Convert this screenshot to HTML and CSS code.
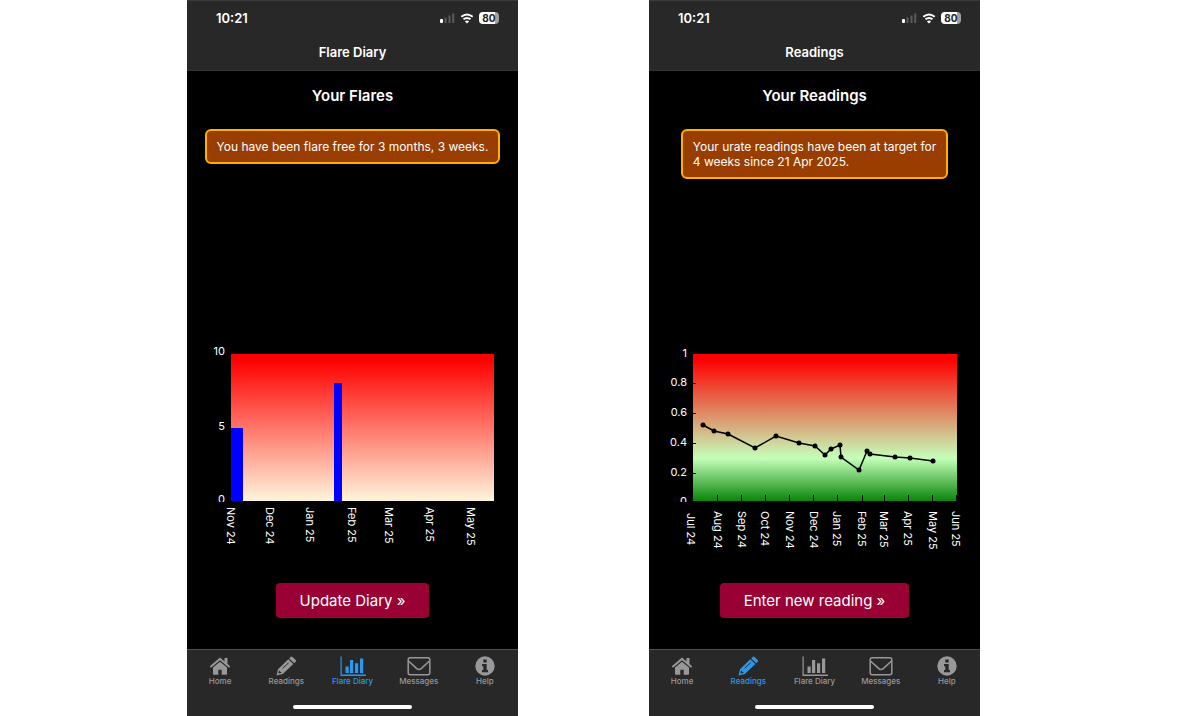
FILE: index.html
```html
<!DOCTYPE html>
<html lang="en">
<head>
    <meta charset="UTF-8">
    <meta name="viewport" content="width=device-width, initial-scale=1.0">
    <title>Flare Diary</title>
    <link rel="stylesheet" href="styles.css">
</head>
<body>
<!-- Shared icons -->
<svg class="icon-defs" width="0" height="0" aria-hidden="true">
    <symbol id="icon-home" viewBox="0 0 22 20">
        <path d="M11 5.8 4 11.6V18q0 .8.8.8H9.3v-5h3.400v5h4.500q.8 0 .8-.8v-6.400z"/>
        <path d="M11 1.600 .8 10.300l1.200 1.400 9-7.500 9 7.500 1.200-1.400-2.700-2.300V2h-3v3.500z"/>
    </symbol>
    <symbol id="icon-pencil" viewBox="0 0 22 20">
        <path fill-rule="evenodd" d="M1.500 19.500 3 13.200 13.300 3.200l5 4.800L7.800 18zM3.900 15l-.5 2.600 2.800-.6.2-1-1.400-.2-.2-1.300zM7.300 12.200l.5.5 6-5.800-.5-.5z"/>
        <path d="m14.200 2.400 1.500-1.500q.9-.8 1.800 0l3.200 3.100q.9.900 0 1.800L19.200 7.200z"/>
    </symbol>
    <symbol id="icon-chart" viewBox="0 0 26 20">
        <path d="M.5 .5h1.200v18H26V20H.5z"/>
        <path d="M5.500 10.500h3.200v6.500H5.500zM10 4h3.200v13H10zM15 7.300h3.200V17H15zM20 2.500h3.200V17H20z"/>
    </symbol>
    <symbol id="icon-mail" viewBox="0 0 24 20">
        <rect x="1.200" y="1.800" width="21.600" height="17" rx="2" fill="none" stroke="currentColor" stroke-width="1.500"/>
        <path d="M1.800 5.200 9.800 12.600q2.200 1.900 4.400 0L22.200 5.200" fill="none" stroke="currentColor" stroke-width="1.500"/>
    </symbol>
    <symbol id="icon-info" viewBox="0 0 20 20">
        <path fill-rule="evenodd" d="M10 .3a9.700 9.700 0 1 0 0 19.400 9.700 9.700 0 0 0 0-19.400zM8.300 3.500h3.400v3H8.300zM7 8h4.700v6H13v2.200H7V14h1.300v-3.800H7z"/>
    </symbol>
    <symbol id="icon-signal" viewBox="0 0 16 12">
        <rect x="1" y="7" width="3" height="4" rx="1" fill="#fff"/>
        <path d="M5.500 5.500h2V11h-2zM9.500 3.500h2V11h-2zM13.200 1.500h2V11h-2z" fill="#5b5b5b"/>
    </symbol>
    <symbol id="icon-wifi" viewBox="0 0 14 12">
        <path d="M1.300 4.800q5.700-4.600 11.400 0M3.500 7.300q3.500-2.700 7 0" fill="none" stroke="#fff" stroke-width="2"/>
        <path d="M7 11.500 4.900 9.400q2.100-1.600 4.200 0z" fill="#fff"/>
    </symbol>
</svg>

<main class="screens">
    <!-- Flare diary screen -->
    <section class="phone">
        <header class="top">
            <div class="status">
                <span>10:21</span>
                <span class="status-icons">
                    <svg class="signal"><use href="#icon-signal"/></svg>
                    <svg class="wifi"><use href="#icon-wifi"/></svg>
                    <span class="battery">80</span>
                </span>
            </div>
            <h1>Flare Diary</h1>
        </header>
        <div class="content">
            <h2>Your Flares</h2>
            <p class="notice">You have been flare free for 3 months, 3 weeks.</p>
            <svg class="chart" viewBox="0 0 331 220" role="img" aria-label="Flares by month">
                <defs>
                    <linearGradient id="flare-bg" x1="0" y1="0" x2="0" y2="1">
                        <stop offset="0.04" stop-color="#ff0000"/>
                        <stop offset="1" stop-color="#fff5dc"/>
                    </linearGradient>
                    <clipPath id="axis-clip"><rect width="331" height="162"/></clipPath>
                </defs>
                <rect x="44" y="14" width="263" height="147" fill="url(#flare-bg)"/>
                <rect class="bar" x="44" y="88" width="12" height="73"/>
                <rect class="bar" x="147" y="43" width="8" height="118"/>
                <g class="y-labels" clip-path="url(#axis-clip)">
                    <text x="38" y="15">10</text>
                    <text x="38" y="90">5</text>
                    <text x="38" y="163">0</text>
                </g>
                <g class="x-labels">
                    <text transform="translate(40 167) rotate(90)">Nov 24</text>
                    <text transform="translate(79 167) rotate(90)">Dec 24</text>
                    <text transform="translate(119 167) rotate(90)">Jan 25</text>
                    <text transform="translate(161 167) rotate(90)">Feb 25</text>
                    <text transform="translate(198 167) rotate(90)">Mar 25</text>
                    <text transform="translate(239 167) rotate(90)">Apr 25</text>
                    <text transform="translate(280 167) rotate(90)">May 25</text>
                </g>
            </svg>
            <button class="action" type="button">Update Diary »</button>
        </div>
        <nav class="tabs">
            <a href="#home"><svg><use href="#icon-home"/></svg>Home</a>
            <a href="#readings"><svg><use href="#icon-pencil"/></svg>Readings</a>
            <a href="#diary" class="active"><svg><use href="#icon-chart"/></svg>Flare Diary</a>
            <a href="#messages"><svg><use href="#icon-mail"/></svg>Messages</a>
            <a href="#help"><svg><use href="#icon-info"/></svg>Help</a>
        </nav>
    </section>

    <!-- Readings screen -->
    <section class="phone">
        <header class="top">
            <div class="status">
                <span>10:21</span>
                <span class="status-icons">
                    <svg class="signal"><use href="#icon-signal"/></svg>
                    <svg class="wifi"><use href="#icon-wifi"/></svg>
                    <span class="battery">80</span>
                </span>
            </div>
            <h1>Readings</h1>
        </header>
        <div class="content">
            <h2>Your Readings</h2>
            <p class="notice">Your urate readings have been at target for<br>4 weeks since 21 Apr 2025.</p>
            <svg class="chart" viewBox="0 0 331 220" role="img" aria-label="Urate readings by month">
                <defs>
                    <linearGradient id="reading-bg" x1="0" y1="0" x2="0" y2="1">
                        <stop offset="0.04" stop-color="#ff0000"/>
                        <stop offset="0.71" stop-color="#c4ffb9"/>
                        <stop offset="1" stop-color="#0a850a"/>
                    </linearGradient>
                </defs>
                <rect x="44" y="14" width="264" height="147" fill="url(#reading-bg)"/>
                <path class="ticks" d="M44 43.500h3M44 73.500h3M44 103.500h3M44 133.500h3M68.500 155v6M92.500 155v6M116.500 155v6M140.500 155v6M164.500 155v6M188.500 155v6M213.500 155v6M235.500 155v6M259.500 155v6M283.500 155v6M307.500 155v6"/>
                <polyline class="line" points="54,85 65,91 79,94 106,108 127,96 150,103 166,106 176,115 182,109 191,105 192,117 210,130 218,111 221,114 246,117 261,118 284,121"/>
                <g class="dots">
                    <circle cx="54" cy="85" r="2.500"/>
                    <circle cx="65" cy="91" r="2.500"/>
                    <circle cx="79" cy="94" r="2.500"/>
                    <circle cx="106" cy="108" r="2.500"/>
                    <circle cx="127" cy="96" r="2.500"/>
                    <circle cx="150" cy="103" r="2.500"/>
                    <circle cx="166" cy="106" r="2.500"/>
                    <circle cx="176" cy="115" r="2.500"/>
                    <circle cx="182" cy="109" r="2.500"/>
                    <circle cx="191" cy="105" r="2.500"/>
                    <circle cx="192" cy="117" r="2.500"/>
                    <circle cx="210" cy="130" r="2.500"/>
                    <circle cx="218" cy="111" r="2.500"/>
                    <circle cx="221" cy="114" r="2.500"/>
                    <circle cx="246" cy="117" r="2.500"/>
                    <circle cx="261" cy="118" r="2.500"/>
                    <circle cx="284" cy="121" r="2.500"/>
                </g>
                <g class="y-labels" clip-path="url(#axis-clip)">
                    <text x="38" y="17">1</text>
                    <text x="38" y="46">0.8</text>
                    <text x="38" y="76">0.6</text>
                    <text x="38" y="106">0.4</text>
                    <text x="38" y="136">0.2</text>
                    <text x="38" y="165">0</text>
                </g>
                <g class="x-labels">
                    <text transform="translate(38 173) rotate(90)">Jul 24</text>
                    <text transform="translate(65 171) rotate(90)">Aug 24</text>
                    <text transform="translate(89 171) rotate(90)">Sep 24</text>
                    <text transform="translate(112 171) rotate(90)">Oct 24</text>
                    <text transform="translate(137 171) rotate(90)">Nov 24</text>
                    <text transform="translate(161 171) rotate(90)">Dec 24</text>
                    <text transform="translate(184 171) rotate(90)">Jan 25</text>
                    <text transform="translate(209 171) rotate(90)">Feb 25</text>
                    <text transform="translate(231 171) rotate(90)">Mar 25</text>
                    <text transform="translate(255 171) rotate(90)">Apr 25</text>
                    <text transform="translate(280 171) rotate(90)">May 25</text>
                    <text transform="translate(303 171) rotate(90)">Jun 25</text>
                </g>
            </svg>
            <button class="action" type="button">Enter new reading »</button>
        </div>
        <nav class="tabs">
            <a href="#home"><svg><use href="#icon-home"/></svg>Home</a>
            <a href="#readings" class="active"><svg><use href="#icon-pencil"/></svg>Readings</a>
            <a href="#diary"><svg><use href="#icon-chart"/></svg>Flare Diary</a>
            <a href="#messages"><svg><use href="#icon-mail"/></svg>Messages</a>
            <a href="#help"><svg><use href="#icon-info"/></svg>Help</a>
        </nav>
    </section>
</main>
</body>
</html>
```
FILE: styles.css
```css
* {
    box-sizing: border-box;
}

body {
    margin: 0;
    background: #fff;
    font-family: Inter, 'Liberation Sans', sans-serif;
}

.icon-defs {
    position: absolute;
}

.screens {
    display: grid;
    grid-template-columns: 1fr 1fr;
    column-gap: 131px;
    min-height: 100vh;
    padding: 0 220px 0 187px;
}

.phone {
    display: flex;
    flex-direction: column;
    background: #000;
    color: #fff;
}

/* Header */
.top {
    height: 71px;
    background: #282828;
    border-top: 1px solid #3c3c3c;
    border-bottom: 1px solid #333;
}

.status {
    display: flex;
    justify-content: space-between;
    align-items: center;
    height: 34px;
    padding: 0 19px 0 29px;
    font-size: 13px;
    font-weight: 600;
}

.status-icons {
    display: flex;
    align-items: center;
    gap: 5px;
}

.signal {
    width: 16px;
    height: 12px;
}

.wifi {
    width: 14px;
    height: 12px;
}

.battery {
    width: 20px;
    height: 12px;
    border-radius: 4px;
    background: linear-gradient(90deg, #fff 80%, #a0a0a0 80%);
    color: #222;
    font-size: 10px;
    font-weight: 700;
    line-height: 12px;
    text-align: center;
}

h1 {
    margin: 7px 0 0;
    font-size: 13px;
    font-weight: 600;
    line-height: 20px;
    text-align: center;
}

/* Content */
.content {
    flex: 1;
    display: flex;
    flex-direction: column;
    align-items: center;
}

h2 {
    margin: 15px 0 23px;
    font-size: 15px;
    font-weight: 600;
    line-height: 20px;
}

.notice {
    margin: 0;
    padding: 8px 10px;
    border: 2px solid #ffb000;
    border-radius: 6px;
    background: #993d00;
    font-size: 12px;
    line-height: 15px;
}

.chart {
    display: block;
    width: 100%;
    margin-top: auto;
}

.chart text {
    fill: #fff;
    font-size: 11px;
}

.y-labels {
    text-anchor: end;
}

.bar {
    fill: #0000ff;
}

.ticks {
    stroke: #000;
    stroke-width: 1;
}

.line {
    fill: none;
    stroke: #000;
    stroke-width: 1.5;
}

.action {
    height: 35px;
    margin: 23px 0 31px;
    padding: 0 24px;
    border: 0;
    border-radius: 4px;
    background: #990033;
    color: #fff;
    font-family: inherit;
    font-size: 15px;
}

/* Tab bar */
.tabs {
    position: relative;
    display: flex;
    height: 67px;
    padding-top: 6px;
    border-top: 1px solid #505050;
    background: #282828;
}

.tabs::after {
    content: "";
    position: absolute;
    bottom: 7px;
    left: 32%;
    width: 36%;
    height: 4px;
    border-radius: 2px;
    background: #fff;
}

.tabs a {
    flex: 1;
    display: flex;
    flex-direction: column;
    align-items: center;
    color: #98989a;
    font-size: 8px;
    font-weight: 500;
    line-height: 10px;
    text-decoration: none;
}

.tabs svg {
    width: 26px;
    height: 20px;
    fill: currentColor;
}

.tabs .active {
    color: #2b98ee;
}
```
